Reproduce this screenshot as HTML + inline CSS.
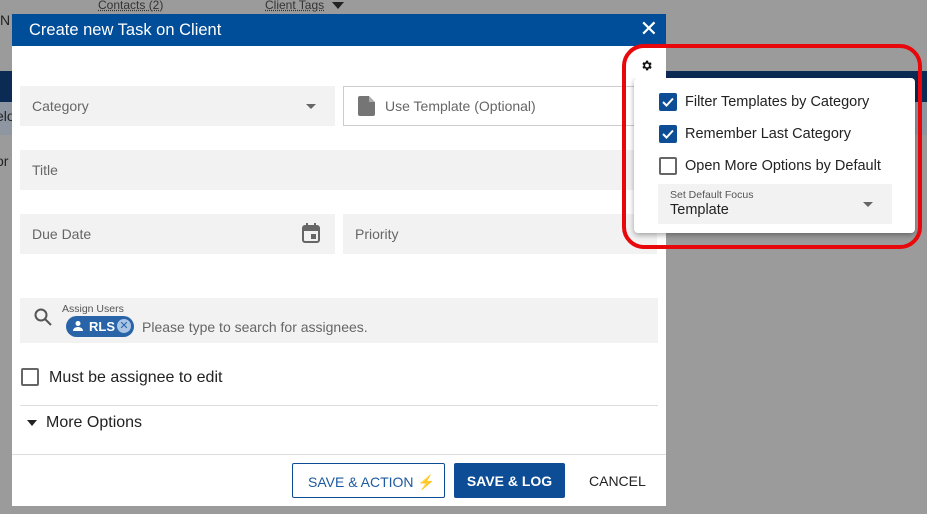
<!DOCTYPE html><html><head><style>
*{box-sizing:border-box;margin:0;padding:0}
body{width:927px;height:514px;background:#9b9b9b;font-family:"Liberation Sans",sans-serif;position:relative;overflow:hidden;color:#222}
.abs{position:absolute}
.f{position:absolute;background:#f2f2f2;color:#666;font-size:14px;padding-left:12px;display:flex;align-items:center}
.tri{position:absolute;width:0;height:0;border-left:5px solid transparent;border-right:5px solid transparent;border-top:5px solid #666}
.cb{position:absolute;width:18px;height:18px;border-radius:2px}
.on{background:#0d4d95}
.off{border:2px solid #666;background:#fff}
.lbl{position:absolute;font-size:14.5px;color:#222}
</style></head><body>
<div class="abs" style="left:98px;top:-2px;font-size:12px;color:#333;text-decoration:underline dotted">Contacts (2)</div>
<div class="abs" style="left:265px;top:-2px;font-size:12px;color:#333;text-decoration:underline dotted">Client Tags</div>
<div class="abs" style="left:332px;top:2px;border-left:6px solid transparent;border-right:6px solid transparent;border-top:7px solid #222"></div>
<div class="abs" style="left:0;top:12px;font-size:14px;color:#222">N</div>
<div class="abs" style="left:0;top:71px;width:927px;height:31px;background:#0b2b55"></div>
<div class="abs" style="left:0;top:102px;width:927px;height:33px;background:#8e96a2"></div>
<div class="abs" style="left:-4px;top:108px;font-size:14px;color:#222">elo</div>
<div class="abs" style="left:-4px;top:153px;font-size:14px;color:#222">or</div>

<div class="abs" style="left:12px;top:14px;width:654px;height:492px;background:#fff">
 <div style="height:32px;background:#004d99;color:#fff;font-size:16.5px;padding:7px 0 0 17px">Create new Task on Client</div>
 <div class="abs" style="right:8px;top:4px;color:#fff;font-size:22px;line-height:22px">✕</div>
</div>
<div class="f" style="left:20px;top:86px;width:315px;height:40px">Category</div>
<div class="tri" style="left:306px;top:104px"></div>
<div class="f" style="left:343px;top:86px;width:314px;height:40px;background:#fff;border:1px solid #ccc;padding-left:41px">Use Template (Optional)</div>
<svg class="abs" style="left:358px;top:96px" width="18" height="20"><path d="M2 0h9l6 6v12a2 2 0 0 1-2 2H2a2 2 0 0 1-2-2V2a2 2 0 0 1 2-2z" fill="#757575"/><path d="M11 0v6h6" fill="#fff" opacity=".4"/></svg>
<div class="f" style="left:20px;top:150px;width:637px;height:40px">Title</div>
<div class="f" style="left:20px;top:214px;width:315px;height:40px">Due Date</div>
<svg class="abs" style="left:302px;top:223px" width="18" height="20"><rect x="1" y="3" width="16" height="16" rx="2" fill="none" stroke="#666" stroke-width="2"/><rect x="1" y="3" width="16" height="5" fill="#666"/><rect x="4" y="0" width="2" height="4" fill="#666"/><rect x="12" y="0" width="2" height="4" fill="#666"/><rect x="9" y="11" width="5" height="5" fill="#666"/></svg>
<div class="f" style="left:343px;top:214px;width:314px;height:40px">Priority</div>
<div class="f" style="left:20px;top:298px;width:638px;height:45px"></div>
<svg class="abs" style="left:34px;top:308px" width="18" height="18"><circle cx="7" cy="7" r="5.5" fill="none" stroke="#555" stroke-width="2"/><path d="M11 11l6 6" stroke="#555" stroke-width="2"/></svg>
<div class="abs" style="left:62px;top:303px;font-size:10.5px;color:#555">Assign Users</div>
<div class="abs" style="left:66px;top:316px;width:68px;height:21px;border-radius:11px;background:#2a64a8;color:#fff;font-size:13px;font-weight:bold;padding:3px 0 0 23px">RLS</div>
<svg class="abs" style="left:72px;top:320px" width="12" height="12"><circle cx="6" cy="3.5" r="2.5" fill="#fff"/><path d="M1 11c0-3 3-4 5-4s5 1 5 4z" fill="#fff"/></svg>
<div class="abs" style="left:117px;top:319px;width:14px;height:14px;border-radius:50%;background:#a9c4e4;color:#2a64a8;font-size:11px;line-height:14px;text-align:center">✕</div>
<div class="abs" style="left:142px;top:319px;font-size:14px;color:#666">Please type to search for assignees.</div>
<div class="cb off" style="left:21px;top:368px"></div>
<div class="lbl" style="left:49px;top:369px;font-size:16px">Must be assignee to edit</div>
<div class="abs" style="left:20px;top:405px;width:638px;height:1px;background:#ddd"></div>
<div class="abs" style="left:27px;top:420px;border-left:5px solid transparent;border-right:5px solid transparent;border-top:6px solid #222"></div>
<div class="lbl" style="left:46px;top:414px;font-size:16px">More Options</div>
<div class="abs" style="left:12px;top:454px;width:654px;height:1px;background:#ddd"></div>
<div class="abs" style="left:292px;top:463px;width:153px;height:35px;border:1px solid #0d4d95;border-radius:2px;color:#1d5aa0;font-size:14px;padding:10px 0 0 15px">SAVE &amp; ACTION <span style="color:#f5c000">⚡</span></div>
<div class="abs" style="left:454px;top:463px;width:111px;height:35px;background:#0d4d95;border-radius:2px;color:#fff;font-size:14px;font-weight:bold;text-align:center;padding-top:10px">SAVE &amp; LOG</div>
<div class="abs" style="left:589px;top:473px;font-size:14px;color:#222">CANCEL</div>

<div class="abs" style="left:634px;top:78px;width:281px;height:155px;background:#fff;border-radius:4px;box-shadow:0 2px 6px rgba(0,0,0,.35)"></div>
<div class="abs" style="left:634px;top:46px;width:32px;height:32px;background:#fff"></div>
<svg class="abs" style="left:640px;top:59px" width="13" height="13" viewBox="0 0 24 24"><path fill="#111" d="M19.4 13a7.5 7.5 0 0 0 0-2l2.1-1.6-2-3.5-2.5 1a7 7 0 0 0-1.7-1L15 3h-4l-.4 2.7a7 7 0 0 0-1.7 1l-2.5-1-2 3.5L6.6 11a7.5 7.5 0 0 0 0 2l-2.1 1.6 2 3.5 2.5-1a7 7 0 0 0 1.7 1L11 21h4l.4-2.7a7 7 0 0 0 1.7-1l2.5 1 2-3.5zM13 15.5a3.5 3.5 0 1 1 0-7 3.5 3.5 0 0 1 0 7z"/></svg>
<div class="cb on" style="left:659px;top:93px"></div><svg class="abs" style="left:659px;top:93px" width="18" height="18"><path d="M4 9l3.5 3.5L14 5.5" stroke="#fff" stroke-width="2" fill="none"/></svg>
<div class="lbl" style="left:685px;top:94px">Filter Templates by Category</div>
<div class="cb on" style="left:659px;top:125px"></div><svg class="abs" style="left:659px;top:125px" width="18" height="18"><path d="M4 9l3.5 3.5L14 5.5" stroke="#fff" stroke-width="2" fill="none"/></svg>
<div class="lbl" style="left:685px;top:126px">Remember Last Category</div>
<div class="cb off" style="left:659px;top:157px"></div>
<div class="lbl" style="left:685px;top:158px">Open More Options by Default</div>
<div class="abs" style="left:658px;top:184px;width:234px;height:40px;background:#f2f2f2"></div>
<div class="abs" style="left:670px;top:189px;font-size:10.5px;color:#555">Set Default Focus</div>
<div class="abs" style="left:670px;top:202px;font-size:14.5px;color:#222">Template</div>
<div class="tri" style="left:863px;top:202px"></div>
<div class="abs" style="left:622px;top:44px;width:300px;height:205px;border:4px solid #e8070b;border-radius:22px"></div>
</body></html>
